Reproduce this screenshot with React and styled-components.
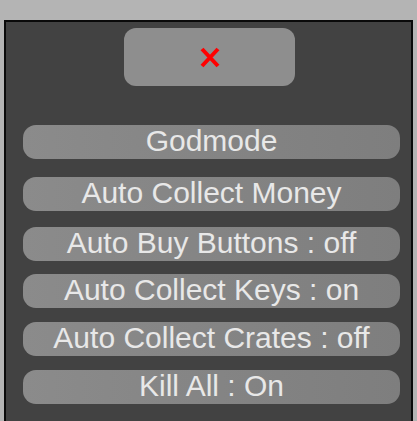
import React from "react";
import styled, { createGlobalStyle } from "styled-components";

const Global = createGlobalStyle`
  html, body { margin: 0; padding: 0; background: #b4b4b4; overflow: hidden; }
  body { font-family: "Liberation Sans", Arial, sans-serif; }
`;

const Page = styled.div`
  width: 417px;
  height: 421px;
  padding: 20px 4px 0 4px;
  box-sizing: border-box;
  background: #b4b4b4;
`;

const Panel = styled.div`
  height: 420px;
  background: #424242;
  border: 2px solid #0a0a0a;
  border-bottom: none;
  box-sizing: border-box;
  display: flex;
  flex-direction: column;
  align-items: center;
  padding: 6px 11px 0 17px;
`;

const CloseButton = styled.button`
  width: 171px;
  height: 58px;
  margin-left: -4px;
  border: none;
  border-radius: 12px;
  background: #8e8e8e;
  display: flex;
  align-items: center;
  justify-content: center;
  padding: 0;
  cursor: pointer;
`;

const Toggle = styled.button`
  width: 100%;
  height: 34px;
  margin-top: ${(p) => p.$mt}px;
  border: none;
  border-radius: 13px;
  background: linear-gradient(90deg, #8b8b8b 0%, #838383 60%, #7e7e7e 100%);
  color: #e8e8e8;
  font-family: "Liberation Sans", Arial, sans-serif;
  font-size: 30px;
  line-height: 34px;
  padding: 0 0 3px 0;
  display: flex;
  align-items: center;
  justify-content: center;
  white-space: nowrap;
  cursor: pointer;
`;

const items = [
  { label: "Godmode", mt: 39 },
  { label: "Auto Collect Money", mt: 18 },
  { label: "Auto Buy Buttons : off", mt: 16 },
  { label: "Auto Collect Keys : on", mt: 13 },
  { label: "Auto Collect Crates : off", mt: 14 },
  { label: "Kill All : On", mt: 14 },
];

export default function App() {
  return (
    <Page>
      <Global />
      <Panel>
        <CloseButton aria-label="close">
          <svg width="20" height="21" viewBox="0 0 20 21">
            <path d="M2 2 L18 19 M18 2 L2 19" stroke="#ff0000" strokeWidth="4" strokeLinecap="butt" />
          </svg>
        </CloseButton>
        {items.map((it) => (
          <Toggle key={it.label} $mt={it.mt}>
            {it.label}
          </Toggle>
        ))}
      </Panel>
    </Page>
  );
}
